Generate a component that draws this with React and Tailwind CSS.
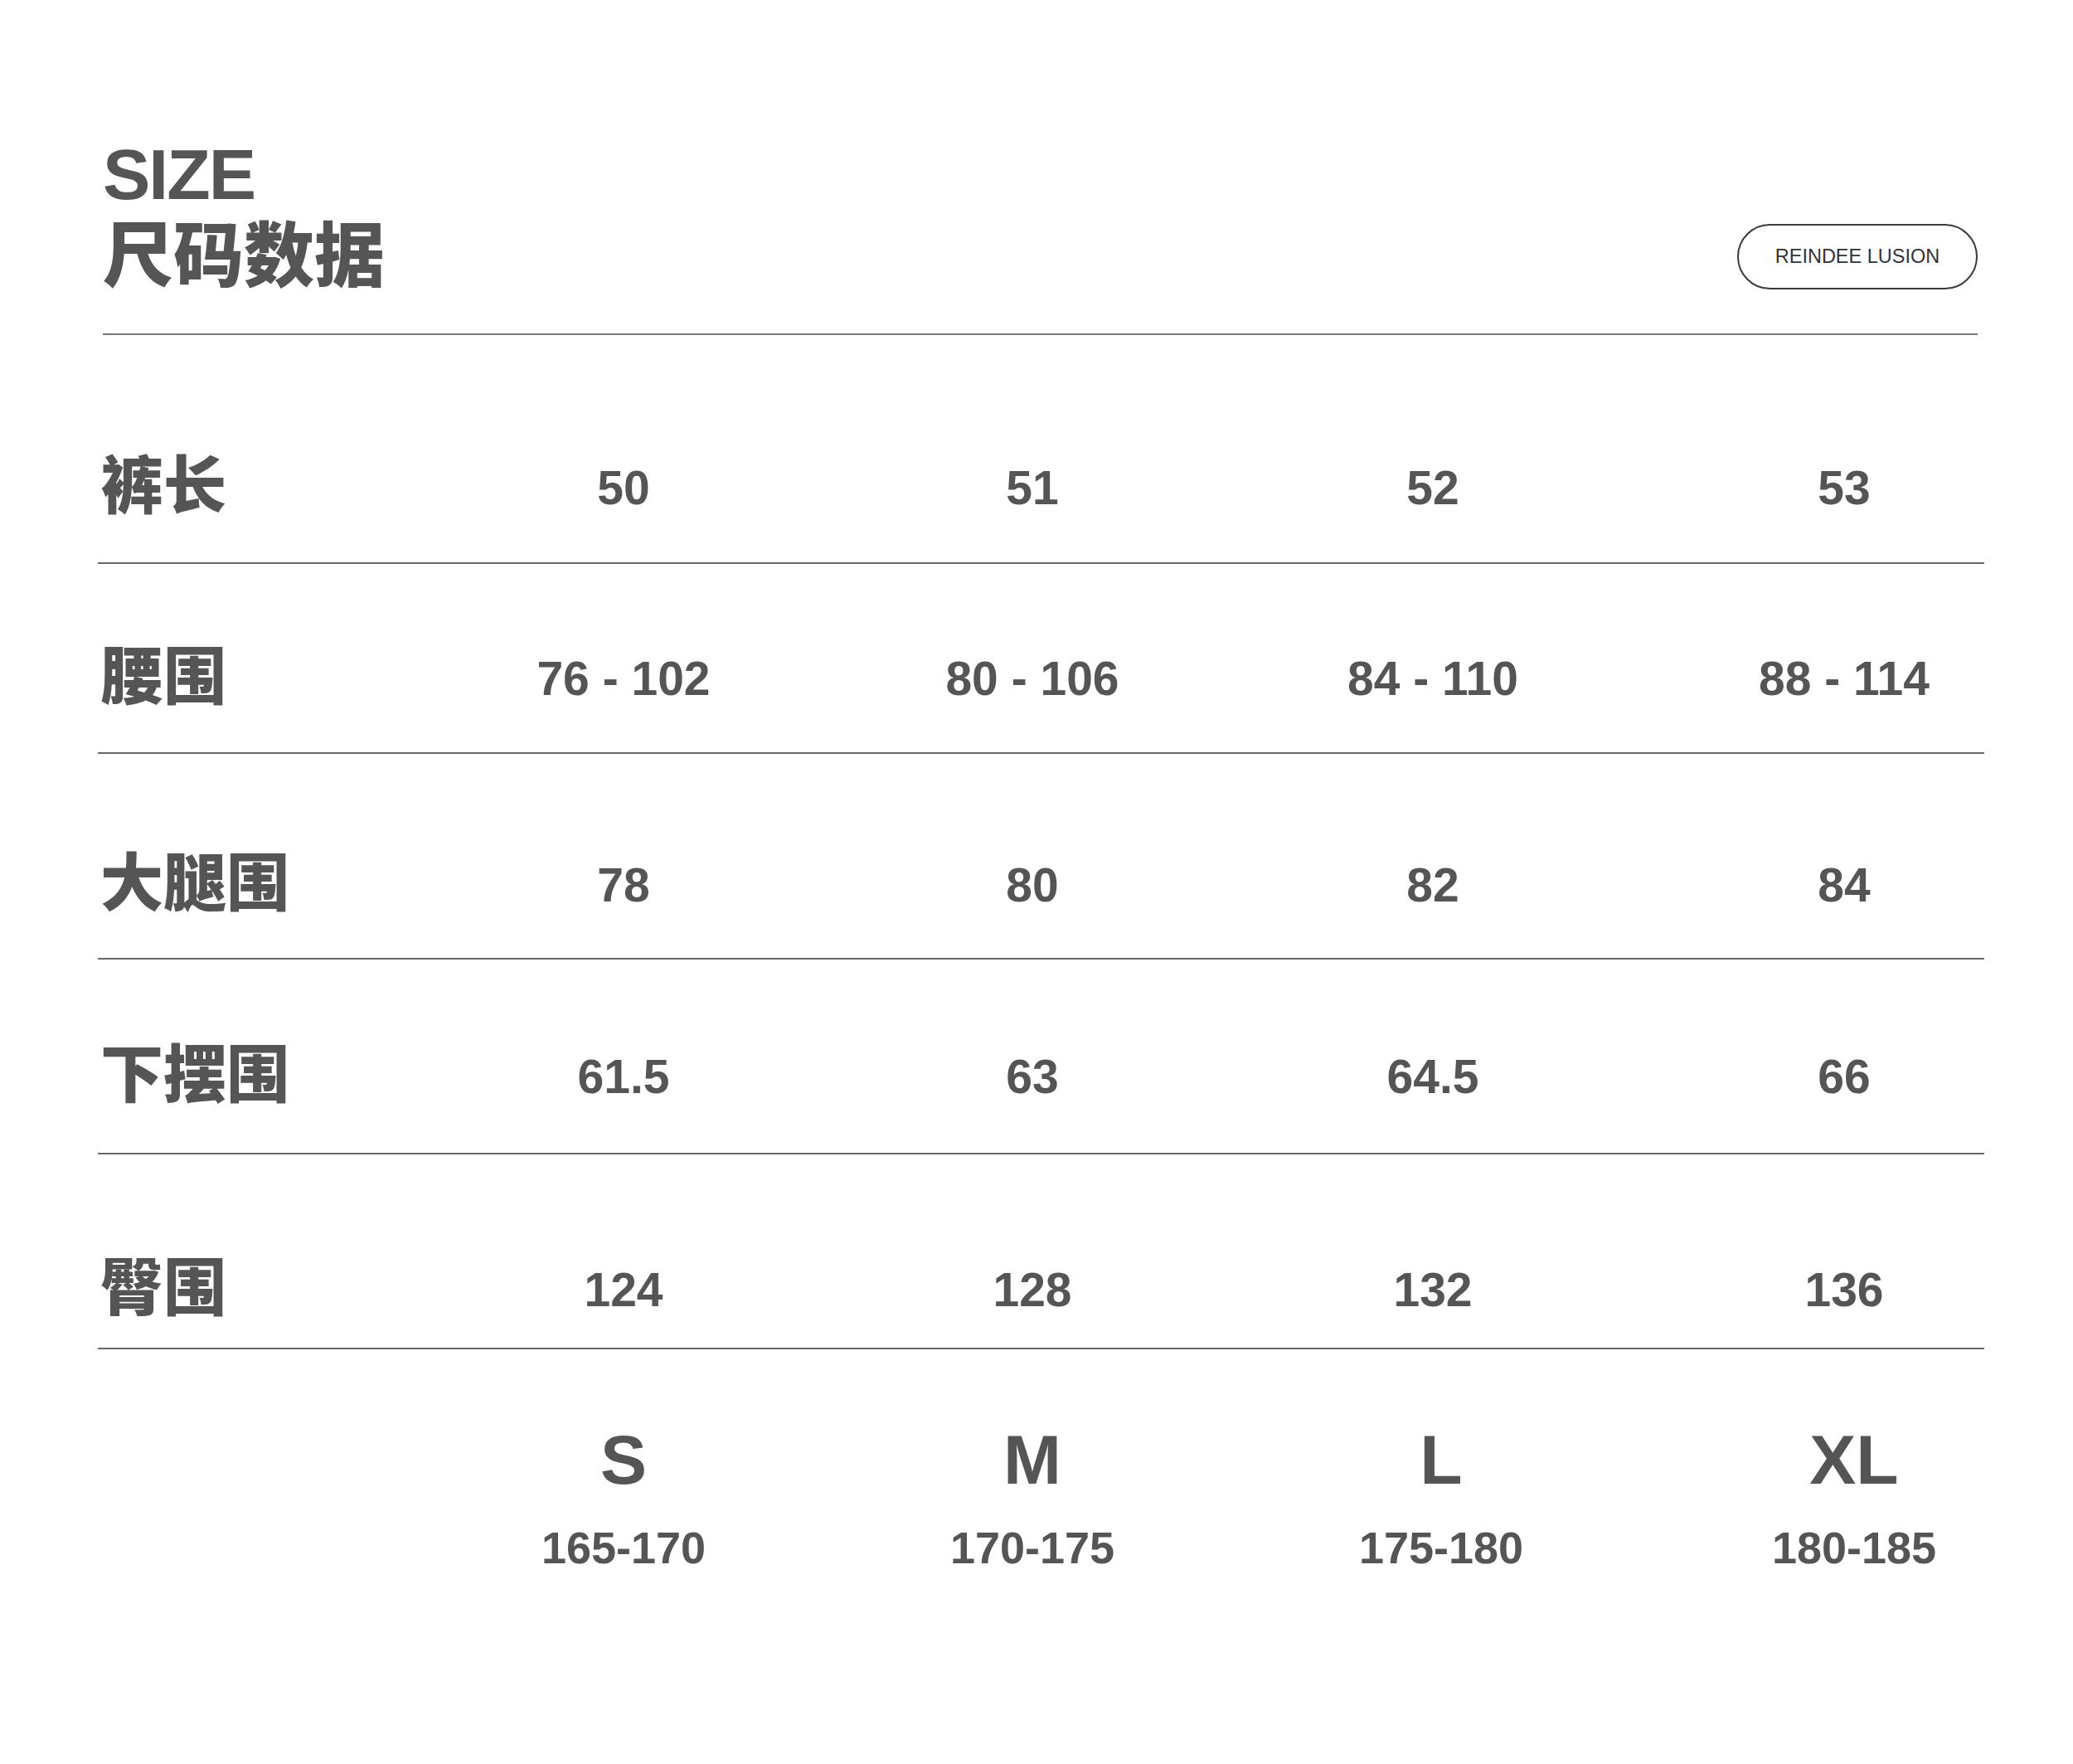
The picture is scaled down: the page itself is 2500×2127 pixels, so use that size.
const latin = { fontFamily: '"Liberation Sans", Arial, sans-serif' };
const cjk = { fontFamily: '"Noto Sans CJK SC", "Noto Sans", sans-serif' };

const rows = [
  { label: "裤长", values: ["50", "51", "52", "53"], mt: "mt-[134px]", lt: "mt-[40px]" },
  { label: "腰围", values: ["76 - 102", "80 - 106", "84 - 110", "88 - 114"], mt: "mt-[88px]", lt: "mt-[39px]" },
  { label: "大腿围", values: ["78", "80", "82", "84"], mt: "mt-[108px]", lt: "mt-[38px]" },
  { label: "下摆围", values: ["61.5", "63", "64.5", "66"], mt: "mt-[91px]", lt: "mt-[42px]" },
  { label: "臀围", values: ["124", "128", "132", "136"], mt: "mt-[113px]", lt: "mt-[20px]" },
];

const sizes = [
  { name: "S", range: "165-170" },
  { name: "M", range: "170-175" },
  { name: "L", range: "175-180" },
  { name: "XL", range: "180-185" },
];

function Row({ row }) {
  return (
    <div>
      <div
        className={`${row.mt} h-[100px] pl-[3px] grid grid-cols-[386px_490px_496px_470px_522px] items-center text-[#555555]`}
      >
        <div style={cjk} className="pb-[16px] text-[76px] leading-none font-black">
          {row.label}
        </div>
        {row.values.map((v, i) => (
          <div
            key={i}
            style={latin}
            className="text-center text-[57px] leading-none font-bold whitespace-pre"
          >
            {v}
          </div>
        ))}
      </div>
      <div className={`${row.lt} h-[2px] w-[2275px] bg-[#686868]`}></div>
    </div>
  );
}

export default function App() {
  return (
    <div className="w-[2500px] h-[2127px] bg-white overflow-hidden">
      <div className="ml-[124px] w-[2261px] pt-[167px] flex items-end justify-between">
        <div className="flex flex-col text-[#555555]">
          <div style={latin} className="h-[86px] text-[86px] leading-none font-bold tracking-[-2px]">
            SIZE
          </div>
          <div style={cjk} className="mt-[6px] h-[85px] text-[85px] leading-none font-black">
            尺码数据
          </div>
        </div>
        <div
          style={latin}
          className="mb-[-5px] h-[79px] w-[290px] rounded-full border-2 border-[#3a3a3a] flex items-center justify-center text-[23.5px] text-[#333333]"
        >
          REINDEE LUSION
        </div>
      </div>
      <div className="ml-[124px] mt-[58px] h-[2px] w-[2261px] bg-[#777777]"></div>

      <div className="ml-[118px]">
        {rows.map((row) => (
          <Row key={row.label} row={row} />
        ))}

        <div className="pl-[3px] mt-[91px] grid grid-cols-[386px_490px_496px_490px_506px] text-[#555555]">
          <div></div>
          {sizes.map((s) => (
            <div key={s.name} className="flex flex-col items-center" style={latin}>
              <div className="h-[84px] text-[84px] leading-none font-bold">{s.name}</div>
              <div className="mt-[37px] h-[54px] text-[54px] leading-none font-bold">{s.range}</div>
            </div>
          ))}
        </div>
      </div>
    </div>
  );
}
